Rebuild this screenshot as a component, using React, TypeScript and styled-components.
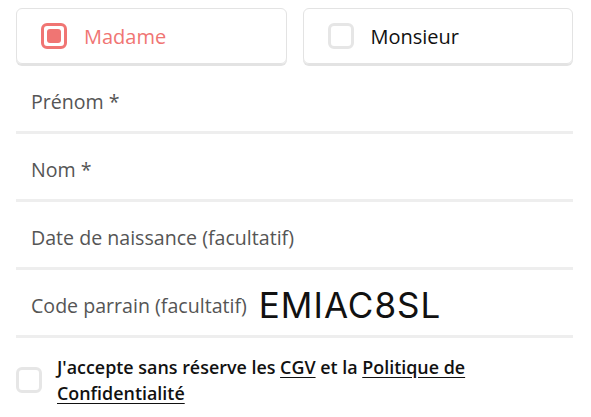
import React, { useState } from 'react';
import styled, { createGlobalStyle } from 'styled-components';

const GlobalStyle = createGlobalStyle`
    html, body {
        margin: 0;
        padding: 0;
        background: #ffffff;
    }
    body {
        font-family: 'Open Sans', 'Liberation Sans', sans-serif;
    }
`;

const coral = '#f07573';

const Form = styled('form')`
    padding: 8px 18px 0 16px;
    display: flex;
    flex-direction: column;
`;

const GenderRow = styled('div')`
    display: grid;
    grid-template-columns: 1fr 1fr;
    gap: 16px;
`;

const GenderCard = styled('label')<{ $active: boolean }>`
    height: 56px;
    box-sizing: border-box;
    display: flex;
    align-items: center;
    gap: 17px;
    padding: 0 24px;
    border: 1px solid #e3e3e3;
    border-radius: 6px;
    box-shadow: 0 2px 0 #e3e3e3;
    margin-bottom: 2px;
    cursor: pointer;
    font-size: 20px;
    font-weight: 500;
    color: ${({ $active }) => ($active ? coral : '#111111')};
`;

const Box = styled('span')<{ $checked: boolean }>`
    width: 26px;
    height: 26px;
    box-sizing: border-box;
    flex-shrink: 0;
    border: 3px solid ${({ $checked }) => ($checked ? coral : '#e6e6e6')};
    border-radius: 6px;
    display: flex;
    align-items: center;
    justify-content: center;

    &::after {
        content: '';
        display: ${({ $checked }) => ($checked ? 'block' : 'none')};
        width: 14px;
        height: 14px;
        border-radius: 3px;
        background: ${coral};
    }
`;

const Field = styled('div')`
    height: 68px;
    box-sizing: border-box;
    padding: 5px 15px 0;
    display: flex;
    align-items: center;
    gap: 12px;
    border-bottom: 3px solid #eeeeee;
    font-size: 19.6px;
    color: #555555;
`;

const Code = styled('span')`
    font-family: Inter, 'Liberation Sans', sans-serif;
    font-size: 35px;
    font-weight: 400;
    letter-spacing: 1px;
    color: #111111;
`;

const Terms = styled('label')`
    display: flex;
    align-items: center;
    gap: 15px;
    padding-top: 16px;
    font-size: 17.9px;
    font-weight: 600;
    line-height: 26px;
    color: #111111;
`;

const TermsLink = styled('a')`
    color: inherit;
    text-decoration: underline;
    text-underline-offset: 3px;
`;

export default function App() {
    const [gender, setGender] = useState<'mme' | 'm'>('mme');
    const [accepted, setAccepted] = useState(false);

    return (
        <>
            <GlobalStyle />
            <Form>
                <GenderRow>
                    <GenderCard $active={gender === 'mme'} onClick={() => setGender('mme')}>
                        <Box $checked={gender === 'mme'} />
                        Madame
                    </GenderCard>
                    <GenderCard $active={gender === 'm'} onClick={() => setGender('m')}>
                        <Box $checked={gender === 'm'} />
                        Monsieur
                    </GenderCard>
                </GenderRow>
                <Field>Prénom *</Field>
                <Field>Nom *</Field>
                <Field>Date de naissance (facultatif)</Field>
                <Field>
                    Code parrain (facultatif)
                    <Code>EMIAC8SL</Code>
                </Field>
                <Terms onClick={() => setAccepted(!accepted)}>
                    <Box $checked={accepted} />
                    <span>
                        J'accepte sans réserve les <TermsLink href="#">CGV</TermsLink> et la{' '}
                        <TermsLink href="#">Politique de Confidentialité</TermsLink>
                    </span>
                </Terms>
            </Form>
        </>
    );
}
